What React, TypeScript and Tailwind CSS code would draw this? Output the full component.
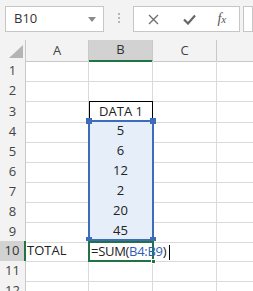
const rows = [
  { n: 1, a: "", b: "" },
  { n: 2, a: "", b: "" },
  { n: 3, a: "", b: "DATA 1" },
  { n: 4, a: "", b: "5" },
  { n: 5, a: "", b: "6" },
  { n: 6, a: "", b: "12" },
  { n: 7, a: "", b: "2" },
  { n: 8, a: "", b: "20" },
  { n: 9, a: "", b: "45" },
  { n: 10, a: "TOTAL", b: "" },
  { n: 11, a: "", b: "" },
  { n: 12, a: "", b: "" },
]

const App = () => {
  return (
    <div className="w-[253px] h-[291px] overflow-hidden bg-white font-['Open_Sans',sans-serif] text-[13px] text-[#222]">
      {/* formula bar */}
      <div className="flex items-start h-[40px] bg-[#f3f3f3] pt-[6px] pl-[5px]">
        <div className="flex items-center justify-between w-[102px] h-[26px] bg-white border border-[#c6c6c6] pl-[8px] pr-[7px]">
          <span className="text-[13px] text-[#333]">B10</span>
          <svg width="8" height="5" viewBox="0 0 8 5"><path d="M0 0h8L4 5z" fill="#8a8a8a" /></svg>
        </div>
        <div className="flex flex-col gap-[2px] ml-[14px] mt-[7px]">
          <span className="w-[2px] h-[2px] bg-[#b5b5b5]" />
          <span className="w-[2px] h-[2px] bg-[#b5b5b5]" />
          <span className="w-[2px] h-[2px] bg-[#b5b5b5]" />
        </div>
        <div className="flex items-center w-[110px] h-[26px] ml-[13px] bg-white border border-[#c6c6c6]">
          <svg className="ml-[14px]" width="11" height="11" viewBox="0 0 11 11">
            <path d="M1 1l9 9M10 1l-9 9" stroke="#707070" strokeWidth="1.4" />
          </svg>
          <svg className="ml-[24px]" width="13" height="11" viewBox="0 0 13 11">
            <path d="M1 5.5l4 4L12 1.5" stroke="#666" strokeWidth="2.2" fill="none" />
          </svg>
          <span className="ml-[21px] font-['Liberation_Serif',serif] italic text-[14px] text-[#555] leading-none">
            f<span className="text-[11px]">x</span>
          </span>
        </div>
        <div className="w-[10px] h-[26px] ml-[3px] bg-white border border-[#c6c6c6]" />
      </div>

      {/* sheet */}
      <div className="relative">
        {/* column headers */}
        <div className="grid grid-cols-[26px_63px_64px_64px_1fr] h-[21px] bg-[#f3f3f3]">
          <div className="flex items-end justify-end border-r border-b border-[#c8c8c8] pr-[2px] pb-[3px]">
            <svg width="14" height="13" viewBox="0 0 14 13"><path d="M14 0v13H0z" fill="#b4b4b4" /></svg>
          </div>
          <div className="flex items-center justify-center border-r border-b border-[#c8c8c8] text-[#444]">A</div>
          <div className="flex items-center justify-center border-r border-b-2 border-b-[#217346] border-r-[#c8c8c8] bg-[#d2d2d2] text-[#333]">B</div>
          <div className="flex items-center justify-center border-r border-b border-[#c8c8c8] text-[#444]">C</div>
          <div className="border-b border-[#c8c8c8]" />
        </div>

        {/* rows */}
        {rows.map((r) => {
          const inRange = r.n >= 4 && r.n <= 9
          const active = r.n === 10
          return (
            <div key={r.n} className="grid grid-cols-[26px_63px_64px_64px_1fr] h-[20px]">
              <div
                className={
                  active
                    ? "flex items-center justify-center bg-[#d2d2d2] border-r-2 border-r-[#217346] border-b border-b-[#c8c8c8] text-[#333]"
                    : "flex items-center justify-center bg-[#f3f3f3] border-r border-b border-[#c8c8c8] text-[#444]"
                }
              >
                {r.n}
              </div>
              <div className="flex items-center pl-[1px] border-r border-b border-[#dadada] whitespace-nowrap">{r.a}</div>
              <div
                className={
                  r.n === 3
                    ? "flex items-center justify-center border border-black"
                    : inRange
                    ? "flex items-center justify-center bg-[#e6eef9] border-r border-b border-[#dadada]"
                    : "flex items-center border-r border-b border-[#dadada]"
                }
              >
                {inRange ? (
                  <div className="flex items-center justify-center w-full h-full border-b border-black mx-[2px]">{r.b}</div>
                ) : (
                  r.b
                )}
              </div>
              <div className="border-r border-b border-[#dadada]" />
              <div className="border-b border-[#dadada]" />
            </div>
          )
        })}

        {/* referenced range highlight */}
        <div className="absolute left-[88px] top-[80px] w-[66px] h-[121px] border-2 border-[#3d6cb9]">
          <span className="absolute left-[-4px] top-[-4px] w-[6px] h-[6px] bg-[#3d6cb9]" />
          <span className="absolute right-[-4px] top-[-4px] w-[6px] h-[6px] bg-[#3d6cb9]" />
          <span className="absolute left-[-4px] bottom-[-2px] w-[6px] h-[4px] bg-[#3d6cb9]" />
          <span className="absolute right-[-4px] bottom-[-2px] w-[6px] h-[4px] bg-[#3d6cb9]" />
        </div>

        {/* active cell */}
        <div className="absolute left-[88px] top-[201px] w-[66px] h-[21px] border-2 border-[#217346]">
          <span className="absolute right-[-4px] bottom-[-4px] w-[5px] h-[5px] bg-[#217346] border border-white" />
        </div>

        {/* formula being typed, spills over into column C */}
        <div className="absolute z-10 left-[91px] top-[201px] h-[21px] flex items-center pt-[1px] whitespace-nowrap tracking-[-0.3px] text-[#222]">
          <span>=SUM(</span>
          <span className="text-[#2f5fb3]">B4:B9</span>
          <span>)</span>
          <span className="ml-[3px] w-[1px] h-[15px] bg-black" />
        </div>
      </div>
    </div>
  )
}

export default App
